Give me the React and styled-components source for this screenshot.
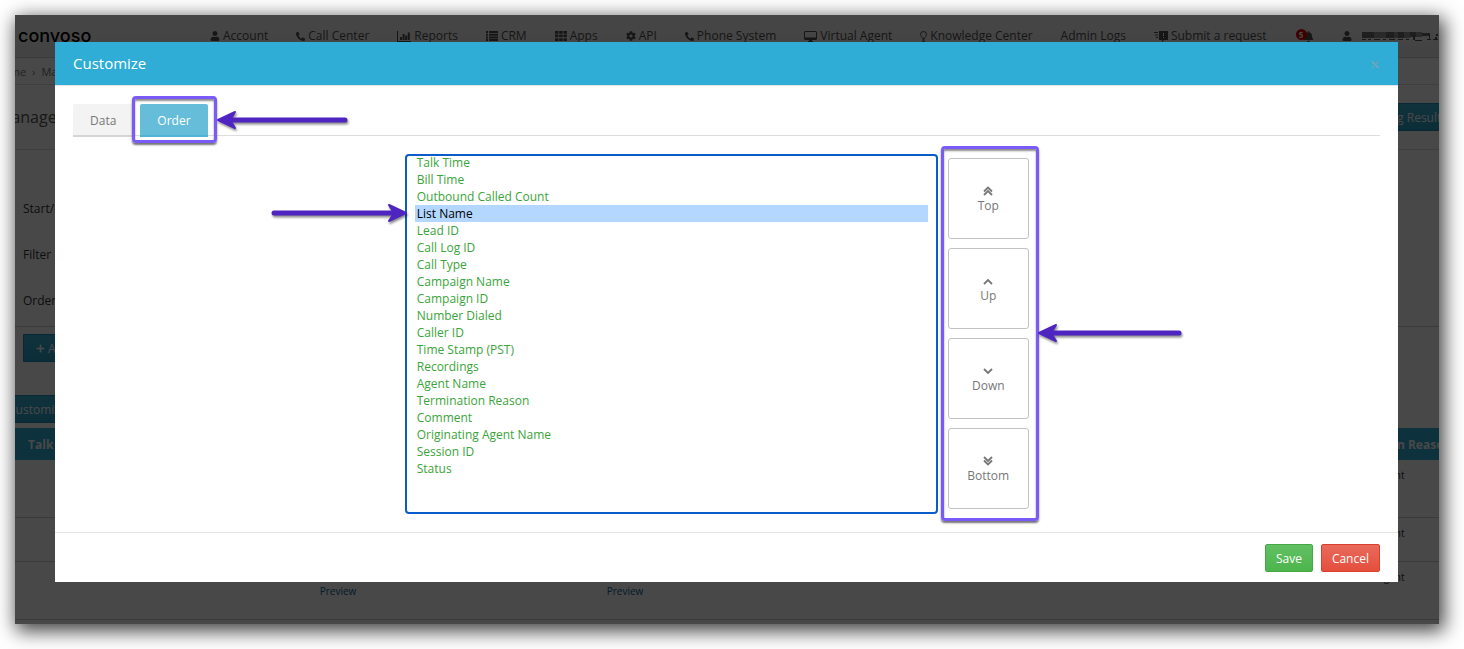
import React, { useState } from 'react';
import styled, { createGlobalStyle } from 'styled-components';
import { FaUser, FaPhoneAlt, FaCog, FaBell, FaPlus } from 'react-icons/fa';

const GlobalStyle = createGlobalStyle`
  * {
    box-sizing: border-box;
  }
  body {
    margin: 0;
    background: #fff;
    color: #333;
    font-family: 'Open Sans', 'Noto Sans', sans-serif;
    font-size: 12px;
    overflow: hidden;
  }
  button, select {
    font: inherit;
  }
`;

const Frame = styled.div`
  position: relative;
  margin: 15px 25px 25px 15px;
  overflow: hidden;
  background: #fff;
`;

const Shadow = styled.div`
  display: flow-root;
  > div {
    box-shadow: 3px 5px 18px 2px rgba(0, 0, 0, 0.75);
  }
`;

const Page = styled.div`
  margin: 0 -25px 0 -20px;
`;

const TopBar = styled.header`
  display: flex;
  align-items: center;
  height: 43px;
  padding-left: 23px;
  background: linear-gradient(#f6f6f6, #ececec);
  border-bottom: 1px solid #ccc;
`;

const Logo = styled.div`
  flex: 0 0 192px;
  color: #000;
  font-family: Inter, sans-serif;
  font-size: 18px;
  font-weight: 500;
  line-height: 20px;
`;

const Nav = styled.nav`
  display: flex;
  flex: 1;
  gap: 28px;
  align-items: center;
`;

const NavLink = styled.a`
  display: flex;
  align-items: center;
  gap: 3px;
  color: #505050;
  line-height: 16px;
  text-decoration: none;
  white-space: nowrap;
`;

const Profile = styled.span`
  display: flex;
  flex: none;
  gap: 10px;
  align-items: center;
  color: #505050;
`;

const Bell = styled.span`
  position: relative;
  display: flex;
  margin-left: 8px;
  color: #505050;
`;

const Count = styled.span`
  position: absolute;
  top: -2px;
  left: -7px;
  width: 11px;
  height: 11px;
  border-radius: 50%;
  background: #e00000;
  color: #fff;
  font-size: 8px;
  font-weight: 700;
  line-height: 11px;
  text-align: center;
`;

const Crumbs = styled.div`
  display: flex;
  align-items: center;
  gap: 6px;
  height: 27px;
  border-bottom: 1px solid #e0e0e0;
  color: #777;
  font-size: 11px;
`;

const TitleRow = styled.div`
  display: flex;
  align-items: center;
  justify-content: space-between;
  height: 65px;
  padding: 0 4px 0 2px;
  border-bottom: 1px solid #e0e0e0;
`;

const Title = styled.h1`
  margin: 0;
  color: #555;
  font-size: 16px;
  font-weight: 400;
`;

const BlueButton = styled.button`
  height: 28px;
  padding: 0 12px;
  border: 1px solid #1f8fb5;
  background: linear-gradient(#3ab2d8, #28a0c8);
  color: #fff;
`;

const Filters = styled.div`
  display: flex;
  flex-direction: column;
  gap: 28px;
  height: 177px;
  padding: 50px 28px 0;
  border-bottom: 1px solid #ccc;
`;

const FilterName = styled.div`
  line-height: 18px;
`;

const AddRow = styled.div`
  display: flex;
  padding: 7px 28px 33px;
`;

const CustomizeRow = styled.div`
  display: flex;
  padding-bottom: 5px;
`;

const Results = styled.table`
  width: calc(100% - 20px);
  margin-left: 20px;
  border-collapse: collapse;
  table-layout: fixed;
  font-size: 10px;
  text-align: center;

  th {
    height: 32px;
    padding: 0;
    background: #2fadd6;
    color: #fff;
    font-size: 12px;
    white-space: nowrap;
  }
  td {
    padding: 8px 0;
    border-bottom: 1px solid #ccc;
    line-height: 14px;
    vertical-align: top;
  }
  a {
    display: block;
    color: #0a5f94;
    text-decoration: none;
  }
`;

const ResultRow = styled.tr`
  height: ${props => props.$height}px;
`;

const PageEnd = styled.div`
  height: 4px;
`;

const Backdrop = styled.div`
  position: absolute;
  inset: 0;
  background: rgba(0, 0, 0, 0.717);
`;

const Modal = styled.div`
  position: absolute;
  top: 27px;
  left: 40px;
  right: 41px;
  background: #fff;
`;

const ModalHeader = styled.div`
  display: flex;
  align-items: center;
  justify-content: space-between;
  height: 44px;
  padding: 0 18px;
  border-bottom: 1px solid #e5e5e5;
  background: #2fadd6;
`;

const ModalTitle = styled.h2`
  margin: 0;
  padding-bottom: 2px;
  color: #fff;
  font-size: 15px;
  font-weight: 500;
  line-height: 24px;
`;

const Close = styled.button`
  display: flex;
  padding: 2px 0 0;
  border: 0;
  background: none;
`;

const ModalBody = styled.div`
  padding: 18px;
`;

const Tabs = styled.div`
  display: flex;
  gap: 7px;
  height: 32px;
  margin-bottom: 18px;
  border-bottom: 1px solid #ddd;
`;

const TabSlot = styled.div`
  position: relative;
  height: 33px;
`;

const Tab = styled.button`
  height: 33px;
  padding: 2px 17px 0;
  border: 0;
  border-bottom: 2px solid ${props => (props.$active ? '#4fb3d3' : '#d5d5d5')};
  border-radius: 2px 2px 0 0;
  background: ${props => (props.$active ? '#65bdd9' : '#f3f3f3')};
  color: ${props => (props.$active ? '#fff' : '#777')};
  font-weight: ${props => (props.$active ? 500 : 400)};
`;

const OrderRow = styled.div`
  display: flex;
  gap: 10px;
  margin: 0 -18px;
  padding-left: calc(25% + 23px);
`;

const ListSlot = styled.div`
  position: relative;
  flex: 0 1 533px;
`;

const FieldList = styled.select`
  display: block;
  width: 100%;
  height: 360px;
  padding: 0 10px;
  border: 0;
  border-radius: 4px;
  outline: 2px solid #0a5ccb;
  outline-offset: -2px;
  background: #fff;
  scrollbar-width: none;

  option {
    min-height: 17px;
    padding: 0 2px;
    color: #3aa43a;
    line-height: 16px;
  }
  option:checked {
    background: linear-gradient(#b3d7ff, #b3d7ff);
    color: #000;
  }
`;

const Moves = styled.div`
  position: relative;
  display: flex;
  flex-direction: column;
  gap: 9px;
  align-self: flex-start;
  margin-top: 4px;
`;

const MoveButton = styled.button`
  display: flex;
  flex-direction: column;
  align-items: center;
  justify-content: center;
  gap: 2px;
  width: 81px;
  height: 81px;
  padding: 0;
  border: 1px solid #c3c3c3;
  border-radius: 3px;
  background: #fff;
  color: #777;
  line-height: 16px;
`;

const Highlight = styled.div`
  position: absolute;
  inset: ${props => props.$inset};
  border: 3px solid #7a5af8;
  border-radius: 4px;
  box-shadow: 0 2px 2px rgba(0, 0, 0, 0.55), inset 0 2px 2px rgba(0, 0, 0, 0.45);
  pointer-events: none;
`;

const ArrowDrawing = styled.svg`
  position: absolute;
  top: ${props => props.$top}px;
  ${props => props.$side}: calc(100% + ${props => props.$gap}px);
  overflow: visible;
  filter: drop-shadow(1px 2px 1px rgba(0, 0, 0, 0.45));
  pointer-events: none;
`;

const ModalFooter = styled.div`
  display: flex;
  justify-content: flex-end;
  gap: 8px;
  padding: 11px 18px 10px;
  border-top: 1px solid #e5e5e5;
`;

const FooterButton = styled.button`
  height: 28px;
  padding: 0 10px;
  border: 1px solid ${props => (props.$danger ? '#d9402d' : '#45a845')};
  border-radius: 2px;
  background: ${props => (props.$danger
    ? 'linear-gradient(#e96a5c, #e44f3d)'
    : 'linear-gradient(#62c062, #4cb54c)')};
  color: #fff;
  font-weight: 500;
`;

const ChartIcon = () => (
  <svg width="14" height="11" viewBox="0 0 14 11" fill="currentColor">
    <path d="M0 0h1v10h13v1H0zM3 6h2v3H3zM5.6 3h2v6h-2zM8.2 4.500h2v4.500h-2zM10.800 1.500h2v7.500h-2z" />
  </svg>
);

const ListIcon = () => (
  <svg width="12" height="10" viewBox="0 0 12 10" fill="currentColor">
    <path d="M0 0h2v2H0zM3 0h9v2H3zM0 2.700h2v2H0zM3 2.700h9v2H3zM0 5.400h2v2H0zM3 5.400h9v2H3zM0 8.100h2v2H0zM3 8.100h9v2H3z" />
  </svg>
);

const GridIcon = () => (
  <svg width="12" height="10" viewBox="0 0 12 10" fill="currentColor">
    <path d="M0 0h3.500v2.700H0zM4.200 0h3.500v2.700H4.200zM8.400 0h3.500v2.700H8.400zM0 3.600h3.500v2.700H0zM4.200 3.600h3.500v2.700H4.200zM8.400 3.600h3.500v2.700H8.400zM0 7.200h3.500v2.700H0zM4.200 7.200h3.500v2.700H4.200zM8.400 7.200h3.500v2.700H8.400z" />
  </svg>
);

const ScreenIcon = () => (
  <svg width="13" height="11" viewBox="0 0 13 11" fill="currentColor">
    <path fillRule="evenodd" d="M1 0h11l1 1v7l-1 1H8v1h1v1H4v-1h1V9H1L0 8V1zM1 1v5.500h11V1z" />
  </svg>
);

const BulbIcon = () => (
  <svg width="7" height="11" viewBox="0 0 7 11" fill="none" stroke="currentColor">
    <path d="M2.500 7.500C2.500 6 .5 5.500.5 3.500a3 3 0 0 1 6 0c0 2-2 2.500-2 4z" />
    <path d="M2 9h3M2.500 10.500h2" />
  </svg>
);

const RequestIcon = () => (
  <svg width="14" height="11" viewBox="0 0 14 11" fill="currentColor">
    <path d="M0 1h4v1H0zM1 3.500h3v1H1zM2 6h2v1H2z" />
    <path fillRule="evenodd" d="M5 0h9v9h-4l-2 2V9H5zM9 2v3h1V2zM9 6v1h1V6z" />
  </svg>
);

const RedactedName = () => (
  <svg width="84" height="11" viewBox="0 0 84 11">
    <path fill="#6a6a6a" d="M0 1h12v6H0zM24 1h8v6h-8zM36 1h6v6h-6zM48 1h6v5h-6zM60 2h8v3h-8z" />
    <path fill="#959595" d="M12 1h12v6H12zM32 1h4v6h-4zM42 1h6v6h-6zM54 1h6v5h-6z" />
    <path fill="#555" d="M0 8h4v1H0zM6 8h3v1H6zM12 8h6v1h-6zM21 8h3v1h-3zM27 8h6v1h-6zM36 8h5v1h-5zM44 8h3v1h-3zM51 5h2v4h-2zM53 9h7v1h-7zM65 8h4v1h-4zM67 3h1v5h-1zM71 8h5v1h-5zM74 3h2v2h-2zM73 6h2v2h-2z" />
  </svg>
);

const navItems = [
  { label: 'Account', icon: <FaUser size={10} /> },
  { label: 'Call Center', icon: <FaPhoneAlt size={9} /> },
  { label: 'Reports', icon: <ChartIcon /> },
  { label: 'CRM', icon: <ListIcon /> },
  { label: 'Apps', icon: <GridIcon /> },
  { label: 'API', icon: <FaCog size={10} /> },
  { label: 'Phone System', icon: <FaPhoneAlt size={9} /> },
  { label: 'Virtual Agent', icon: <ScreenIcon /> },
  { label: 'Knowledge Center', icon: <BulbIcon /> },
  { label: 'Admin Logs' },
  { label: 'Submit a request', icon: <RequestIcon /> },
];

const fields = [
  'Talk Time',
  'Bill Time',
  'Outbound Called Count',
  'List Name',
  'Lead ID',
  'Call Log ID',
  'Call Type',
  'Campaign Name',
  'Campaign ID',
  'Number Dialed',
  'Caller ID',
  'Time Stamp (PST)',
  'Recordings',
  'Agent Name',
  'Termination Reason',
  'Comment',
  'Originating Agent Name',
  'Session ID',
  'Status',
];

const moves = [
  { label: 'Top', path: 'M1 8.500l4-4 4 4M1 12l4-4 4 4' },
  { label: 'Up', path: 'M1 11l4-4 4 4' },
  { label: 'Down', path: 'M1 6l4 4 4-4' },
  { label: 'Bottom', path: 'M1 4l4 4 4-4M1 7.500l4 4 4-4' },
];

const rowHeights = [57, 44, 58];

function Arrow({ length, flip, ...place }) {
  return (
    <ArrowDrawing
      {...place}
      width={length}
      height="20"
      viewBox={`0 0 ${length} 20`}
      aria-hidden="true"
    >
      <g transform={flip ? `translate(${length} 0) scale(-1 1)` : undefined}>
        <path d={`M10 10H${length - 3}`} stroke="#4f25c1" strokeWidth="5" strokeLinecap="round" />
        <path
          d="M1 10L18 2l-5 8 5 8z"
          fill="#4f25c1"
          stroke="#4f25c1"
          strokeWidth="2"
          strokeLinejoin="round"
        />
      </g>
    </ArrowDrawing>
  );
}

function Background() {
  return (
    <Page>
      <TopBar>
        <Logo>convoso</Logo>
        <Nav>
          {navItems.map(item => (
            <NavLink href="#" key={item.label}>
              {item.icon}
              {item.label}
            </NavLink>
          ))}
          <Bell>
            <FaBell size={11} />
            <Count>5</Count>
          </Bell>
          <Profile>
            <FaUser size={10} />
            <RedactedName />
          </Profile>
        </Nav>
      </TopBar>
      <Crumbs>
        <span>Home</span>
        <span>›</span>
        <span>Manage</span>
      </Crumbs>
      <TitleRow>
        <Title>Manage</Title>
        <BlueButton type="button">Saving Results</BlueButton>
      </TitleRow>
      <Filters>
        <FilterName>Start/End</FilterName>
        <FilterName>Filter By</FilterName>
        <FilterName>Order By</FilterName>
      </Filters>
      <AddRow>
        <BlueButton type="button"><FaPlus size={9} /> Add</BlueButton>
      </AddRow>
      <CustomizeRow>
        <BlueButton type="button">Customize</BlueButton>
      </CustomizeRow>
      <Results>
        <colgroup>
          <col width="84" />
          <col width="164" />
          <col width="150" />
          <col width="137" />
          <col width="150" />
          <col />
          <col width="146" />
        </colgroup>
        <thead>
          <tr>
            <th>Talk Time</th>
            <th colSpan="5" aria-label="Details" />
            <th>Termination Reason</th>
          </tr>
        </thead>
        <tbody>
          {rowHeights.map((height, i) => (
            <ResultRow $height={height} key={height}>
              <td />
              <td />
              <td>{i === 2 && <><br /><a href="#">Preview</a></>}</td>
              <td />
              <td>{i === 2 && <><br /><a href="#">Preview</a></>}</td>
              <td />
              <td>Agent</td>
            </ResultRow>
          ))}
        </tbody>
      </Results>
      <PageEnd />
    </Page>
  );
}

export default function App() {
  const [tab, setTab] = useState('Order');
  const [selected, setSelected] = useState(['List Name']);

  return (
    <Shadow>
      <GlobalStyle />
      <Frame>
        <Background />
        <Backdrop />
        <Modal role="dialog" aria-label="Customize">
          <ModalHeader>
            <ModalTitle>Customize</ModalTitle>
            <Close type="button" aria-label="Close">
              <svg width="9" height="9" viewBox="0 0 9 9" fill="none">
                <path d="M1 2l6 6M7 2L1 8" stroke="#7cc6df" />
                <path d="M1 1l7 7M8 1L1 8" stroke="#6aa3b8" strokeWidth="1.6" />
              </svg>
            </Close>
          </ModalHeader>
          <ModalBody>
            <Tabs>
              <TabSlot>
                <Tab type="button" $active={tab === 'Data'} onClick={() => setTab('Data')}>Data</Tab>
              </TabSlot>
              <TabSlot>
                <Tab type="button" $active={tab === 'Order'} onClick={() => setTab('Order')}>Order</Tab>
                <Highlight $inset="-8px -9px -6px -8px" />
                <Arrow length={131} $side="left" $gap={9} $top={6} />
              </TabSlot>
            </Tabs>
            <OrderRow>
              <ListSlot>
                <FieldList
                  multiple
                  size={19}
                  aria-label="Column order"
                  value={selected}
                  onChange={e => setSelected([...e.target.selectedOptions].map(o => o.value))}
                >
                  {fields.map(name => <option key={name}>{name}</option>)}
                </FieldList>
                <Arrow length={136} flip $side="right" $gap={-2} $top={49} />
              </ListSlot>
              <Moves>
                {moves.map(move => (
                  <MoveButton type="button" key={move.label}>
                    <svg width="10" height="13" fill="none" stroke="currentColor" strokeWidth="1.8">
                      <path d={move.path} />
                    </svg>
                    {move.label}
                  </MoveButton>
                ))}
                <Highlight $inset="-12px -10px -12px -7px" />
                <Arrow length={144} $side="left" $gap={9} $top={165} />
              </Moves>
            </OrderRow>
          </ModalBody>
          <ModalFooter>
            <FooterButton type="button">Save</FooterButton>
            <FooterButton type="button" $danger>Cancel</FooterButton>
          </ModalFooter>
        </Modal>
      </Frame>
    </Shadow>
  );
}
